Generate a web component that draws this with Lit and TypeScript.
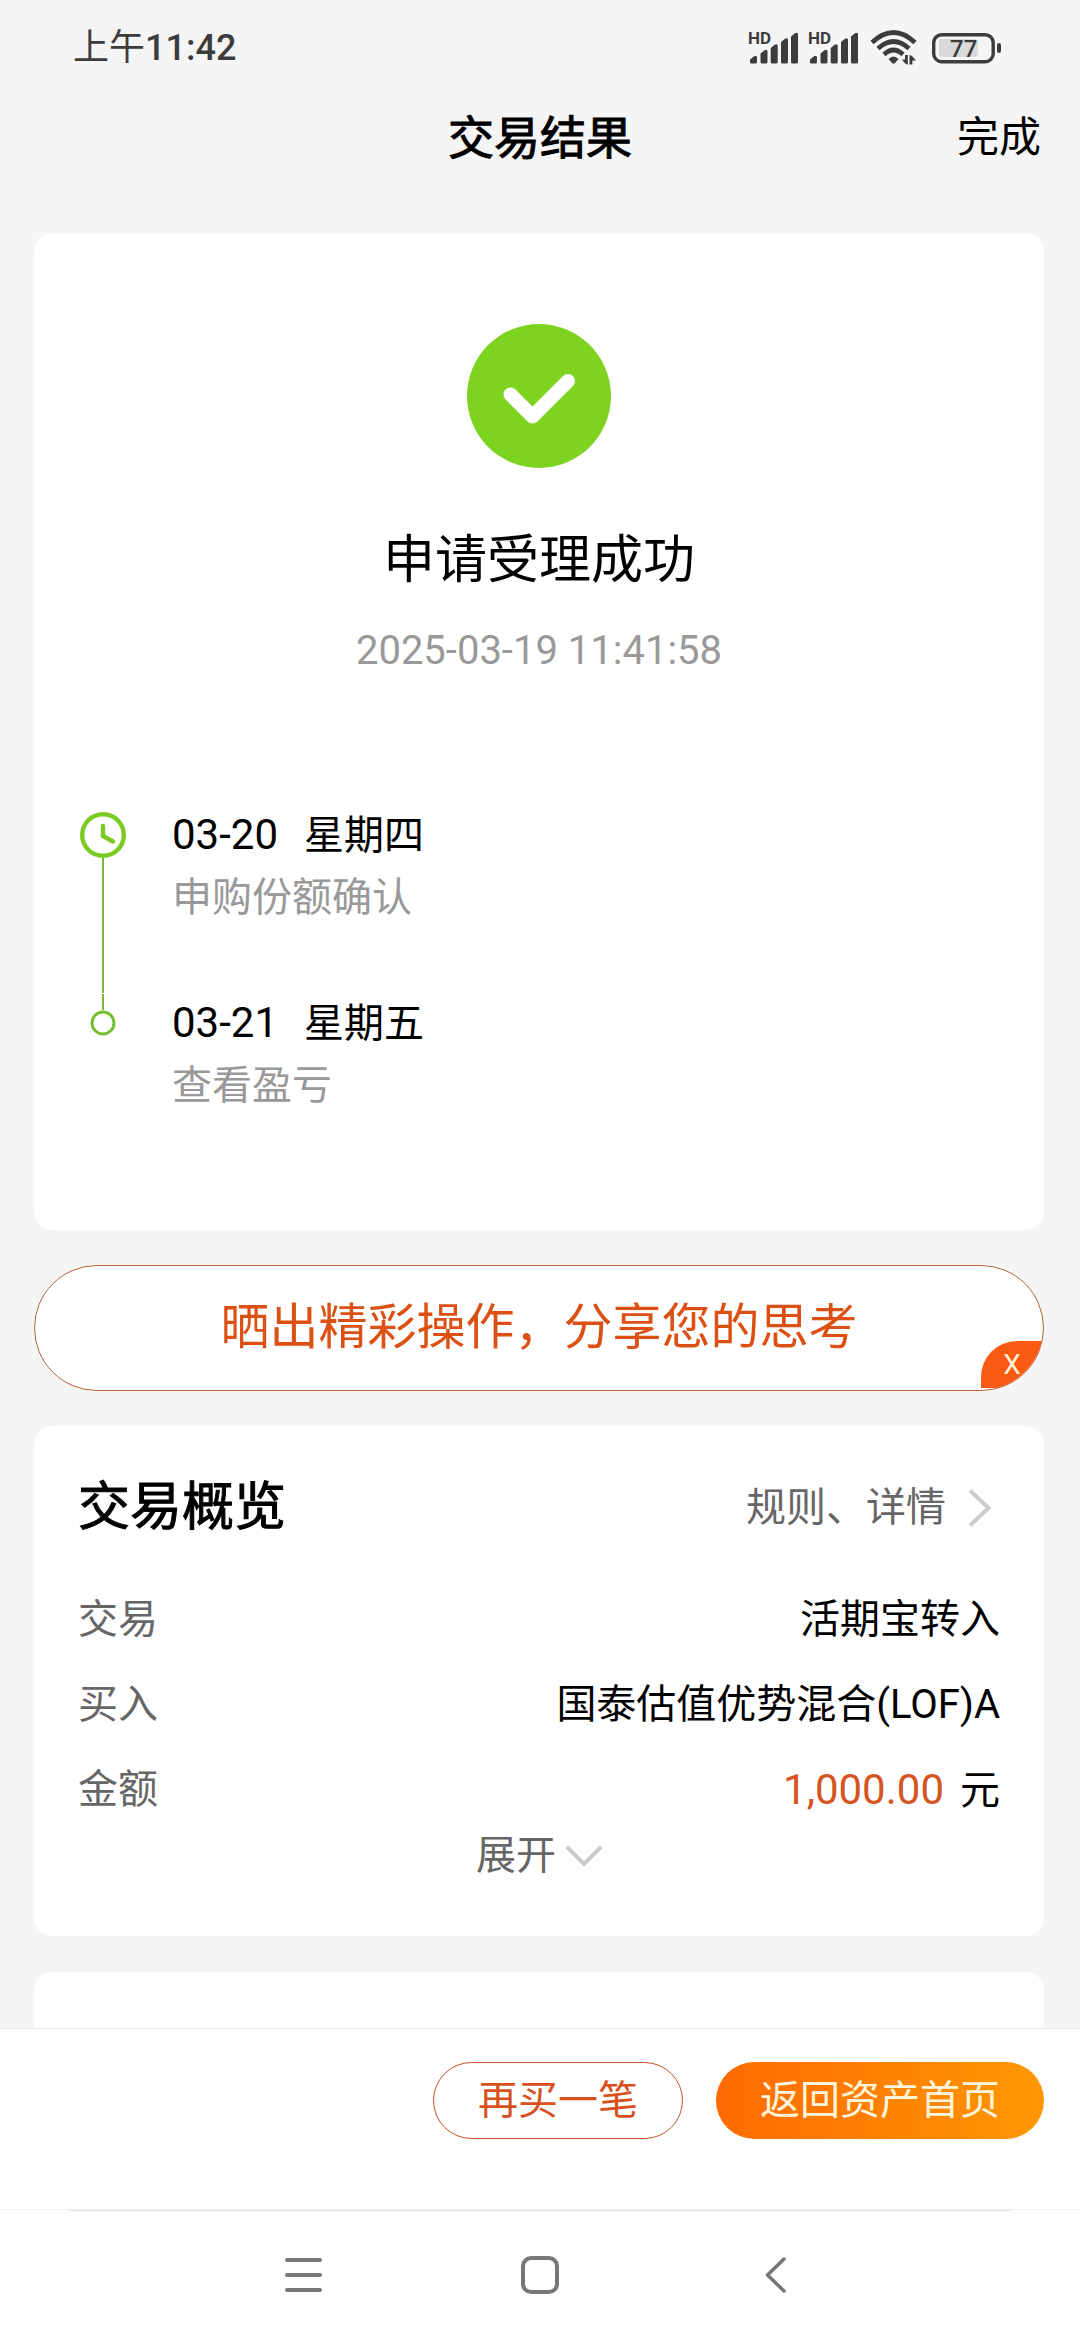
import { LitElement, html, css, svg } from "lit";
import { customElement } from "lit/decorators.js";

interface Step {
  date: string;
  weekday: string;
  note: string;
}

interface Row {
  label: string;
  value: string;
  unit?: string;
}

const steps: Step[] = [
  { date: "03-20", weekday: "星期四", note: "申购份额确认" },
  { date: "03-21", weekday: "星期五", note: "查看盈亏" },
];

const rows: Row[] = [
  { label: "交易", value: "活期宝转入" },
  { label: "买入", value: "国泰估值优势混合(LOF)A" },
  { label: "金额", value: "1,000.00", unit: "元" },
];

@customElement("status-bar")
export class StatusBar extends LitElement {
  static styles = css`
    :host {
      display: flex;
      align-items: center;
      justify-content: space-between;
      height: 96px;
      padding: 0 78px 0 73px;
      color: #3c3c3c;
    }
    .time {
      display: flex;
      align-items: baseline;
      font-size: 36px;
      line-height: 48px;
    }
    .digits {
      font-weight: 500;
    }
    .icons {
      display: flex;
      align-items: center;
      gap: 12px;
    }
    .signals {
      display: flex;
      gap: 10px;
    }
    svg {
      display: block;
      fill: currentColor;
      overflow: visible;
    }
    .label {
      font: 700 17px Roboto, sans-serif;
    }
    .level {
      font: 500 24px Roboto, sans-serif;
    }
  `;

  private signal() {
    return html`<svg width="50" height="42" viewBox="0 -4 50 42" aria-hidden="true">
      <text class="label" x="0" y="13">HD</text>
      ${[
        [2, 25],
        [12.5, 19],
        [22.7, 13.5],
        [33, 7.5],
        [43, 2],
      ].map(
        ([x, y]) =>
          svg`<path d="M${x} ${y + 3.5}l4-3.2q3-1.3 3 1.2V31q0 1.5-1.5 1.5H${x + 1.5}q-1.5 0-1.5-1.5z"/>`
      )}
    </svg>`;
  }

  render() {
    return html`
      <div class="time">上午<span class="digits">11:42</span></div>
      <div class="icons">
        <div class="signals">${this.signal()} ${this.signal()}</div>
        <svg width="48" height="36" viewBox="0 0 48 36" aria-hidden="true">
          <g fill="none" stroke="currentColor" stroke-width="4.6">
            <path d="M2 12.5Q23.5-7.5 45 12.5" />
            <path d="M8 18.5Q23.5 4.5 39 18.5" />
            <path d="M14 24.5Q23.5 15.5 33 24.5" />
          </g>
          <path d="M18.5 29q5-5 10 0l-3.5 4q-1.5 1.3-3 0z" />
          <path d="M35 25h2.8v9.5q-1.8 0-3-1.5l-3-3.5H35zM39.5 34.5V25q2 .2 3 1.5l3.5 4h-3.600v4z" />
        </svg>
        <svg width="72" height="34" viewBox="0 0 72 34" role="img" aria-label="77%">
          <rect x="3.7" y="3.7" width="59.5" height="27" rx="8" fill="none" stroke="currentColor" stroke-width="3.4" />
          <rect x="9" y="8" width="39" height="18" rx="3" fill="#dadada" />
          <rect x="67" y="12" width="4" height="10" rx="2" />
          <text class="level" x="20" y="26">77</text>
        </svg>
      </div>
    `;
  }
}

@customElement("progress-steps")
export class ProgressSteps extends LitElement {
  static styles = css`
    :host {
      display: block;
    }
    .steps {
      margin: 0;
      padding: 0;
      list-style: none;
    }
    .step {
      display: grid;
      grid-template-columns: 46px 1fr;
      column-gap: 46px;
    }
    .rail {
      display: flex;
      flex-direction: column;
      align-items: center;
    }
    .rail svg {
      display: block;
      flex: none;
    }
    .clock {
      margin-top: 7px;
    }
    .line {
      width: 2px;
      flex: 1;
      background: #78b93c;
    }
    .stub {
      width: 2px;
      height: 16px;
      margin-top: 1px;
      background: #78b93c;
    }
    .body {
      line-height: 60px;
      font-size: 40px;
    }
    .step:not(:last-child) .body {
      padding-bottom: 65px;
    }
    .when {
      display: flex;
      align-items: baseline;
      gap: 26px;
      height: 60px;
      color: #000;
    }
    .date {
      font-size: 42px;
    }
    .note {
      margin-top: 3px;
      color: #999;
    }
  `;

  render() {
    return html`<ol class="steps">
      ${steps.map(
        (s, i) => html`<li class="step">
          <div class="rail">
            ${i === 0
              ? html`<svg class="clock" width="46" height="46" viewBox="0 0 46 46" fill="none" stroke="#7acb22" aria-hidden="true">
                    <circle cx="23" cy="23" r="20.8" stroke-width="4.4" />
                    <path d="M23 14v10l10 5.5" stroke-width="4.4" stroke-linecap="round" stroke-linejoin="round" />
                  </svg>
                  <div class="line"></div>`
              : html`<div class="stub"></div>
                  <svg width="26" height="26" viewBox="0 0 26 26" fill="none" stroke="#78be32" aria-hidden="true">
                    <circle cx="13" cy="13" r="11" stroke-width="3" />
                  </svg>`}
          </div>
          <div class="body">
            <div class="when"><span class="date">${s.date}</span><span>${s.weekday}</span></div>
            <div class="note">${s.note}</div>
          </div>
        </li>`
      )}
    </ol>`;
  }
}

@customElement("app-root")
export class AppRoot extends LitElement {
  static styles = css`
    :host {
      display: flex;
      flex-direction: column;
      height: 100vh;
      overflow: hidden;
      background: #f5f5f5;
      color: #000;
      font-family: Roboto, "Noto Sans CJK SC", sans-serif;
      font-size: 40px;
    }
    button,
    a {
      font: inherit;
      color: inherit;
      text-decoration: none;
    }
    button {
      margin: 0;
      padding: 0;
      border: 0;
      background: none;
      cursor: pointer;
    }
    svg {
      display: block;
      flex: none;
    }
    .header {
      display: grid;
      grid-template-columns: 1fr auto 1fr;
      align-items: center;
      height: 84px;
      padding: 0 39px;
    }
    .title,
    .overview-title {
      margin: 0;
      font-weight: 400;
      -webkit-text-stroke: 1px currentColor;
    }
    .title {
      grid-column: 2;
      font-size: 46px;
      line-height: 60px;
    }
    .done {
      justify-self: end;
      font-size: 42px;
      line-height: 60px;
    }
    .content {
      flex: 1;
      min-height: 0;
      overflow: hidden;
      padding: 53px 36px 0 34px;
    }
    .card {
      border-radius: 18px;
      background: #fff;
    }
    .result {
      padding: 91px 46px 114px;
    }
    .badge {
      margin: 0 auto;
    }
    .headline {
      margin: 57px 0 26px;
      font-size: 52px;
      line-height: 72px;
      font-weight: 400;
      text-align: center;
    }
    .stamp {
      margin: 0 0 126px;
      line-height: 56px;
      color: #999;
      text-align: center;
    }
    .share {
      position: relative;
      margin: 35px 0;
      border: 1px solid #b9623a;
      border-radius: 63px;
      overflow: hidden;
      background: #fff;
    }
    .share-main {
      display: block;
      width: 100%;
      font-size: 49px;
      line-height: 124px;
      color: #dc5014;
      text-align: center;
    }
    .share-close {
      position: absolute;
      right: 0;
      bottom: 2px;
      width: 62px;
      height: 47px;
      border-radius: 36px 0 0 0;
      background: #fb5a12;
      color: #fff2d8;
      font-size: 28px;
      line-height: 47px;
    }
    .overview {
      padding: 46px 44px 50px;
    }
    .overview-head {
      display: flex;
      align-items: center;
      justify-content: space-between;
      margin-bottom: 46px;
    }
    .overview-title {
      font-size: 52px;
      line-height: 72px;
    }
    .rules {
      display: flex;
      align-items: center;
      gap: 20px;
      padding-right: 8px;
      line-height: 60px;
      color: #666;
    }
    .rows {
      display: grid;
      gap: 25px;
      margin: 0;
    }
    .row {
      display: flex;
      justify-content: space-between;
      height: 60px;
      line-height: 60px;
    }
    .row dt {
      color: #666;
    }
    .row dd {
      display: flex;
      align-items: baseline;
      gap: 16px;
      margin: 0;
    }
    .amount {
      font-size: 42px;
      color: #d4551f;
    }
    .expand {
      display: flex;
      align-items: center;
      gap: 10px;
      margin: 6px auto 0;
      line-height: 60px;
      color: #666;
    }
    .next {
      height: 200px;
      margin-top: 36px;
    }
    .actions {
      display: flex;
      justify-content: flex-end;
      gap: 33px;
      padding: 33px 36px 70px;
      border-top: 1px solid #ebebeb;
      background: #fff;
    }
    .again,
    .home {
      box-sizing: border-box;
      height: 77px;
      border-radius: 39px;
      line-height: 75px;
    }
    .again {
      padding: 0 44px;
      border: 1px solid #c4532a;
      color: #d9501c;
    }
    .home {
      padding: 0 44px;
      background: linear-gradient(90deg, #ff6a00, #ff9804);
      color: #fff5dc;
    }
    .nav {
      border-top: 1px solid #f2f2f2;
      padding: 0 69px;
      background: #fff;
    }
    .nav-keys {
      display: flex;
      justify-content: center;
      gap: 196px;
      padding: 43px 0 44px;
      border-top: 1px solid #e2e2e2;
    }
  `;

  render() {
    return html`
      <status-bar></status-bar>
      <header class="header">
        <h1 class="title">交易结果</h1>
        <button class="done">完成</button>
      </header>
      <main class="content">
        <section class="card result">
          <svg class="badge" width="144" height="144" viewBox="0 0 144 144" aria-hidden="true">
            <circle cx="72" cy="72" r="72" fill="#7ed321" />
            <path d="M43.5 70.5L65.5 92.5L101 57" fill="none" stroke="#fff" stroke-width="14" stroke-linecap="round" stroke-linejoin="round" />
          </svg>
          <h2 class="headline">申请受理成功</h2>
          <p class="stamp">2025-03-19 11:41:58</p>
          <progress-steps></progress-steps>
        </section>
        <div class="share">
          <button class="share-main">晒出精彩操作，分享您的思考</button>
          <button class="share-close" aria-label="关闭">X</button>
        </div>
        <section class="card overview">
          <div class="overview-head">
            <h2 class="overview-title">交易概览</h2>
            <a class="rules" href="#rules">
              规则、详情
              <svg width="26" height="40" viewBox="0 0 26 40" fill="none" stroke="#ccc" stroke-width="4" aria-hidden="true">
                <path d="M4 2.5L22.5 20L4 37.5" />
              </svg>
            </a>
          </div>
          <dl class="rows">
            ${rows.map(
              (r) => html`<div class="row">
                <dt>${r.label}</dt>
                <dd>
                  ${r.unit
                    ? html`<span class="amount">${r.value}</span><span>${r.unit}</span>`
                    : r.value}
                </dd>
              </div>`
            )}
          </dl>
          <button class="expand">
            展开
            <svg width="36" height="24" viewBox="0 0 36 24" fill="none" stroke="#ccc" stroke-width="4" stroke-linecap="round" aria-hidden="true">
              <path d="M2 4L18 20L34 4" />
            </svg>
          </button>
        </section>
        <section class="card next"></section>
      </main>
      <footer class="actions">
        <button class="again">再买一笔</button>
        <button class="home">返回资产首页</button>
      </footer>
      <nav class="nav">
        <div class="nav-keys">
          <button aria-label="菜单">
            <svg width="42" height="42" viewBox="0 0 42 42" fill="none" stroke="#777" stroke-width="4" stroke-linecap="round" aria-hidden="true">
              <path d="M6 6H39M6 21H39M6 36H39" />
            </svg>
          </button>
          <button aria-label="主页">
            <svg width="42" height="42" viewBox="0 0 42 42" fill="none" stroke="#777" stroke-width="4" aria-hidden="true">
              <rect x="4" y="4" width="34" height="34" rx="8" />
            </svg>
          </button>
          <button aria-label="返回">
            <svg width="42" height="42" viewBox="0 0 42 42" fill="none" stroke="#777" stroke-width="3.5" stroke-linecap="round" stroke-linejoin="round" aria-hidden="true">
              <path d="M27 5L10.5 21L27 37" />
            </svg>
          </button>
        </div>
      </nav>
    `;
  }
}
